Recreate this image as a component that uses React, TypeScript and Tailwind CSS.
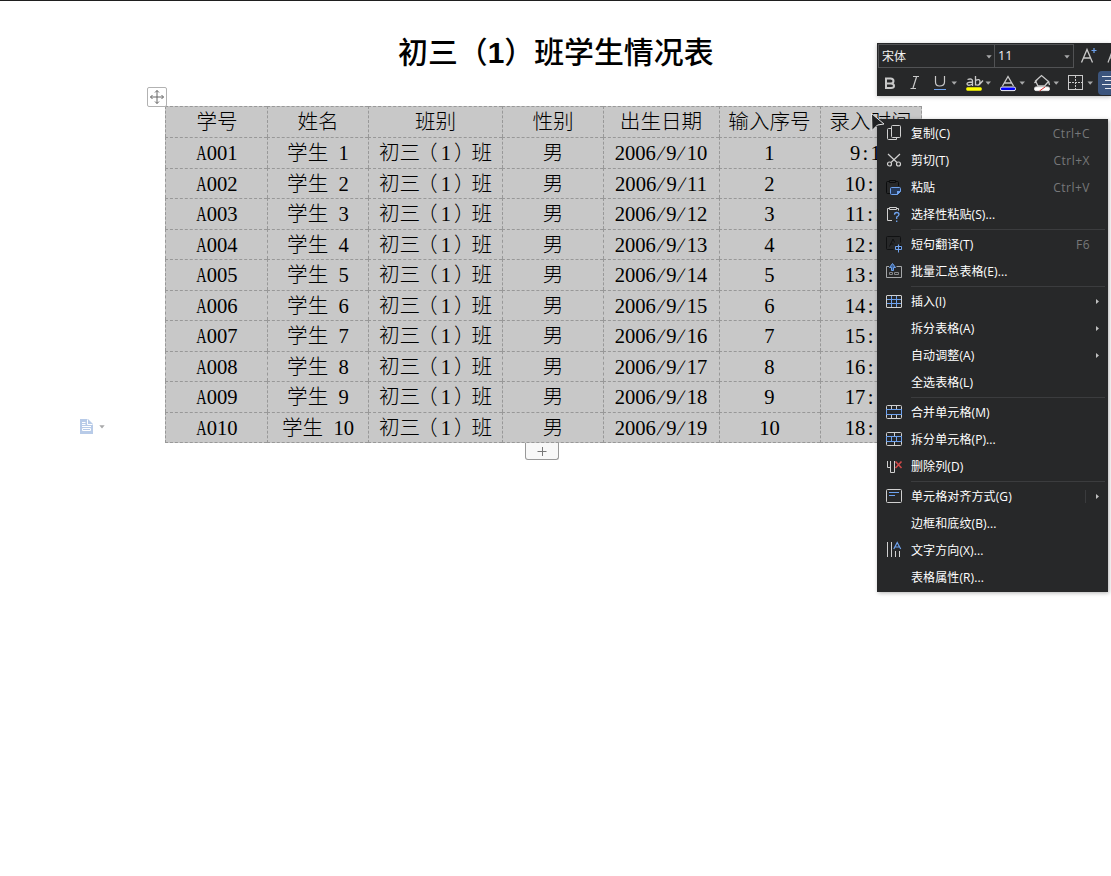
import React from "react";

const headers = ["学号", "姓名", "班别", "性别", "出生日期", "输入序号", "录入时间"];
const students = Array.from({ length: 10 }, (_, i) => [
  "A" + String(i + 1).padStart(3, "0"),
  `学生 ${i + 1}`,
  "初三（1）班",
  "男",
  `2006/9/${10 + i}`,
  String(i + 1),
  `${9 + i}:10`,
]);

/* Keeps letters and punctuation on a half-em advance, like a fixed-pitch serif. */
function HalfWidth({ text }: { text: string }) {
  return (
    <span className="whitespace-pre">
      {text.split(/([A/:（）])/).map((part, i) => {
        if (part === "A")
          return <span key={i} className="-mx-[0.111em] inline-block scale-x-[0.7]">A</span>;
        if (part === "/")
          return <span key={i} className="inline-block w-[0.5em] -skew-x-[14deg] text-center">/</span>;
        if (part === ":") return <span key={i} className="inline-block w-[0.5em] text-center">:</span>;
        if (part === "（")
          return <span key={i} className="ml-[0.35em] mr-[0.15em] [font-feature-settings:'halt']">（</span>;
        if (part === "）")
          return <span key={i} className="ml-[0.15em] mr-[0.35em] [font-feature-settings:'halt']">）</span>;
        return part;
      })}
    </span>
  );
}

const W = "#d0d0d0";
const B = "#6ea2ee";

const icons: Record<string, React.ReactNode> = {
  copy: (
    <g stroke={W}>
      <rect x="7.5" y="5.5" width="9" height="12" rx="1" />
      <path d="M7 8.500H4.500Q3.500 8.500 3.500 9.500V18.500Q3.500 19.500 4.500 19.500H12.500V18" />
    </g>
  ),
  cut: (
    <g stroke={W} strokeWidth="1.200">
      <path d="M4 7L13 15.500M16 7L7 15.500" />
      <circle cx="5.500" cy="17" r="2" />
      <circle cx="14.500" cy="17" r="2" />
    </g>
  ),
  paste: (
    <g>
      <path stroke="#0b0c0d" d="M5.500 7.500H3.500Q2.500 7.500 2.500 8.500V18.500Q2.500 19.500 3.500 19.500H6M11.500 7.500H13.500Q14.500 7.500 14.500 8.500V12M5.500 6.500H11.500V8.500H5.500Z" />
      <path stroke={B} fill="#263a5a" d="M7.500 13.500H15.500Q16.500 13.500 16.500 14.500V17.500L13.500 20.500H7.500Q6.500 20.500 6.500 19.500V14.500Q6.500 13.500 7.500 13.500Z" />
      <path fill={B} stroke="none" d="M13 17H17L13 21Z" />
    </g>
  ),
  special: (
    <g>
      <path stroke={W} d="M5.500 7.500H3.500V19.500H8M12.500 7.500H14.500V9.500M5.500 6.500H12.500V8.500H5.500Z" />
      <path stroke={B} strokeWidth="1.300" d="M10.500 13.700Q10.500 11.500 12.700 11.500Q15 11.500 15 13.500Q15 14.700 12.700 16V18M12.700 19.500V21" />
    </g>
  ),
  translate: (
    <g>
      <rect x="2.500" y="5.500" width="14" height="13" rx="1" stroke="#101112" />
      <path stroke="#101112" d="M5.500 15.500L9 8L12.500 15.500M6.500 13H11" />
      <path stroke="#272829" strokeWidth="2" d="M10.500 20V12.500H18" />
      <path stroke={B} d="M11.500 15.500H17.500V18.500H11.500ZM14.500 13.500V21.500" />
    </g>
  ),
  batch: (
    <g>
      <path stroke="#a5a7a9" d="M5 8.500H2.500V19.500H17.500V8.500H12.500" />
      <path stroke="#85878a" d="M5.500 14.500H8.500V16.500H5.500ZM10.500 14.500H14.500V16.500H10.500Z" />
      <path stroke={B} fill="#3d6297" d="M7.500 12.500V9.500H5.500L8.500 5.500L11.500 9.500H9.500V12.500Z" />
    </g>
  ),
  insert: (
    <g>
      <path stroke={B} d="M3 11.500H17M3 15.500H17M7.500 8V19M12.500 8V19" />
      <rect x="2.500" y="7.500" width="15" height="12" rx="0.500" stroke={W} />
    </g>
  ),
  merge: (
    <g>
      <path stroke={W} d="M2.500 10.500V7.500Q2.500 6.500 3.500 6.500H16.500Q17.500 6.500 17.500 7.500V10.500M2.500 15V18.500Q2.500 19.500 3.500 19.500H16.500Q17.500 19.500 17.500 18.500V15M7.500 7V10M12.500 7V10M7.500 16V19M12.500 16V19" />
      <rect x="2.500" y="10.500" width="15" height="5" stroke={B} />
    </g>
  ),
  split: (
    <g>
      <path stroke={W} d="M2.500 10.500V7.500Q2.500 6.500 3.500 6.500H16.500Q17.500 6.500 17.500 7.500V10.500M2.500 15V18.500Q2.500 19.500 3.500 19.500H16.500Q17.500 19.500 17.500 18.500V15M10.500 7V10M10.500 16V19" />
      <path stroke={B} d="M2.500 10.500H17.500V15.500H2.500ZM7.500 11V15M12.500 11V15" />
    </g>
  ),
  remove: (
    <g>
      <path stroke={W} d="M3.500 8V14.500H6.500M6.500 8V19.500H10.500V15M10.500 8V15" />
      <path stroke="#d04848" strokeWidth="1.600" d="M11.500 8.500L17.500 15M17.500 8.500L11.500 15" />
    </g>
  ),
  align: (
    <g>
      <rect x="2.500" y="6.500" width="15" height="13" rx="1" stroke={W} />
      <path stroke={B} d="M5 9.500H15M5 12.500H11" />
    </g>
  ),
  direction: (
    <g>
      <path stroke={W} d="M3.500 5V20M7.500 5V20M11.500 14V20M15.500 14V20" />
      <path stroke={B} strokeWidth="1.200" d="M9.800 12L13.200 5.500L16.700 12M11 10H15.500" />
    </g>
  ),
};

type Item = { label: string; icon?: string; hint?: string; arrow?: boolean; split?: boolean };

const groups: Item[][] = [
  [
    { label: "复制(C)", icon: "copy", hint: "Ctrl+C" },
    { label: "剪切(T)", icon: "cut", hint: "Ctrl+X" },
    { label: "粘贴", icon: "paste", hint: "Ctrl+V" },
    { label: "选择性粘贴(S)...", icon: "special" },
  ],
  [
    { label: "短句翻译(T)", icon: "translate", hint: "F6" },
    { label: "批量汇总表格(E)...", icon: "batch" },
  ],
  [
    { label: "插入(I)", icon: "insert", arrow: true },
    { label: "拆分表格(A)", arrow: true },
    { label: "自动调整(A)", arrow: true },
    { label: "全选表格(L)" },
  ],
  [
    { label: "合并单元格(M)", icon: "merge" },
    { label: "拆分单元格(P)...", icon: "split" },
    { label: "删除列(D)", icon: "remove" },
  ],
  [
    { label: "单元格对齐方式(G)", icon: "align", arrow: true, split: true },
    { label: "边框和底纹(B)..." },
    { label: "文字方向(X)...", icon: "direction" },
    { label: "表格属性(R)..." },
  ],
];

function MenuRow({ item }: { item: Item }) {
  return (
    <div className="flex h-[27px] items-center pl-[7px]">
      <svg width="20" height="27" viewBox="0 0 20 27" fill="none" className="shrink-0">
        {item.icon && icons[item.icon]}
      </svg>
      <span className="ml-[7px] flex-1 whitespace-nowrap text-[12px] leading-[27px] tracking-[0.1px] text-white">
        {item.label}
      </span>
      {item.hint && (
        <span className="mr-[18px] text-[12px] tracking-[0.5px] text-[#77787a]">{item.hint}</span>
      )}
      {item.split && <span className="mr-[10px] h-[13px] w-px bg-[#3a3b3d]" />}
      {item.arrow && (
        <svg width="3" height="5" viewBox="0 0 3 5" className="mr-[9px]">
          <path d="M0 0L3 2.500L0 5Z" fill="#c0c0c0" />
        </svg>
      )}
    </div>
  );
}

function Caret() {
  return (
    <svg width="6" height="4" viewBox="0 0 6 4" className="shrink-0">
      <path d="M0.300 0.300H5.700L3 3.500Z" fill="#a8a9aa" />
    </svg>
  );
}

function Toolbar() {
  return (
    <div className="absolute left-[877px] top-[42px] h-[53px] w-[234px] overflow-hidden bg-[#272829] text-[#f2f2f2] shadow-[0_1px_4px_rgba(0,0,0,0.25)]">
      <div className="flex h-[26px] w-[260px] pl-px pt-px">
        <div className="flex h-[24px] w-[117px] items-center justify-between border border-[#515254] pl-[3px] pr-[2px] pt-px text-[12px]">
          宋体
          <Caret />
        </div>
        <div className="-ml-px flex h-[24px] w-[80px] items-center justify-between border border-[#515254] pl-[3px] pr-[3px] pt-px text-[12.5px]">
          11
          <Caret />
        </div>
        <svg width="50" height="24" viewBox="0 0 50 24" fill="none" stroke="#c9c9c9" className="ml-px shrink-0">
          <path strokeWidth="1.300" d="M6.500 18.500L12 5.500L17.500 18.500M8.500 14H15.500" />
          <path stroke={B} strokeWidth="1.200" d="M16.500 6.500H21.500M19 4V9" />
          <path strokeWidth="1.200" d="M33 18.500L37.500 6.500L42 18.500M35 14H40" />
        </svg>
      </div>
      <svg width="240" height="27" viewBox="0 0 240 27" fill="none" stroke="#c9c9c9">
        <path strokeWidth="2" d="M9 9.500H13.500Q16.500 9.500 16.500 12Q16.500 14.500 13.500 14.500H9ZM9 14.500H14Q17 14.500 17 17Q17 19 14 19H9Z" />
        <path strokeWidth="1.200" d="M36 7.500H42M33.500 19.500H39M39.500 8L36 19" />
        <path strokeWidth="1.200" d="M58.500 7V13Q58.500 17 62.500 17Q67.500 17 67.500 13V7" />
        <path stroke={B} d="M57 20.500H69" />
        <g strokeWidth="1.300">
          <path d="M90.500 10.500Q95.500 9 95.500 12V17M95.500 13Q90 13 90 15Q91 17.500 95.500 15" />
          <path d="M98.500 7V16.500M98.500 11.500Q103 9 103 13Q102.500 17.500 98.500 15.500M102 16L106 11.500" />
        </g>
        <rect x="89.500" y="18.500" width="15" height="3" rx="1" fill="#ffff00" stroke="#ffff00" strokeWidth="0.500" />
        <path strokeWidth="1.300" d="M125.500 17L131 7.500L136.500 17M127.500 14H134.500" />
        <rect x="123.500" y="18" width="15" height="3.600" rx="1.500" fill="#0000ff" stroke="#f4f4f4" />
        <path strokeWidth="1.300" d="M158.500 12L164.500 6.500L171.500 12.500L167.500 17H161ZM157.500 14L160 11M171.500 12L172.500 16" />
        <rect x="157.500" y="18" width="15" height="3.600" rx="1.500" fill="#fff" stroke="#e4e4e4" />
        <path stroke="#d92d2d" d="M162.500 22L168 18" />
        <rect x="191.500" y="6.500" width="14" height="14" />
        <path strokeDasharray="2 1" d="M192 13.500H205M198.500 7V20" />
        <g fill="#a8a9aa" stroke="none">
          <path d="M74.500 12.500H80L77.200 15.700Z" />
          <path d="M108.500 12.500H114L111.200 15.700Z" />
          <path d="M142.500 12.500H148L145.200 15.700Z" />
          <path d="M176.500 12.500H182L179.200 15.700Z" />
          <path d="M210.500 12.500H216L213.200 15.700Z" />
        </g>
        <rect x="221" y="2" width="30" height="24" rx="4" fill="#3c557d" stroke="none" />
        <path stroke="#e4e8ee" d="M225 7.500H239M228 11.500H239M225 15.500H239M228 19.500H239" />
      </svg>
    </div>
  );
}

export default function App() {
  return (
    <main className="relative h-[876px] w-[1111px] overflow-hidden border-t border-[#1f1f1f] bg-white font-['Open_Sans','Noto_Sans_CJK_SC',sans-serif]">
      <h1 className="ml-[398px] mt-[29px] h-[45px] whitespace-nowrap font-['Liberation_Sans','Noto_Sans_CJK_SC',sans-serif] text-[29.900px] font-medium leading-[45px] text-black">
        初三（<b>1</b>）班学生情况表
      </h1>

      <section className="ml-[165px] mt-[31px] grid w-[757px] grid-cols-[102px_101px_134px_101px_116px_101px_102px] grid-rows-[31px_31px_30px_31px_30px_31px_30px_31px_30px_31px_31px] bg-[#c8c8c8] font-['Liberation_Serif','Noto_Sans_CJK_SC',serif] text-[20.6px] font-light text-black">
        {[headers, ...students].map((row, r) =>
          row.map((cell, c) => (
            <div
              key={`${r}-${c}`}
              className={`flex items-center justify-center overflow-hidden border-l border-t border-dashed border-[#989898] leading-[28px] [word-spacing:0.25em] ${
                c === 0 ? "pl-px" : c < 4 ? "" : "pr-px"
              } ${c === 6 ? "border-r" : ""} ${r === 10 ? "border-b" : ""}`}
            >
              <HalfWidth text={cell} />
            </div>
          ))
        )}
      </section>

      <button className="ml-[525px] flex h-[17px] w-[34px] items-center justify-center rounded-b-[3px] border border-t-0 border-[#999] bg-[#f8f8f8]">
        <svg width="10" height="10" viewBox="0 0 10 10" stroke="#777">
          <path d="M0.500 5.500H9.500M5.500 1V10" />
        </svg>
      </button>

      <div className="absolute left-[147px] top-[86px] flex h-[20px] w-[20px] items-center justify-center rounded-[2px] border border-[#b2b2b2] bg-white">
        <svg width="16" height="16" viewBox="0 0 16 16" fill="none" stroke="#666">
          <path d="M1.500 8H14.500M8 1.500V14.500M3.500 6L1.500 8L3.500 10M12.500 6L14.500 8L12.500 10M6 3.500L8 1.500L10 3.500M6 12.500L8 14.500L10 12.500" />
        </svg>
      </div>

      <div className="absolute left-[80px] top-[418px] flex items-center gap-[6px]">
        <svg width="13" height="15" viewBox="0 0 13 15" fill="none">
          <path d="M0 0H8L13 5V15H0Z" fill="#b8cbe8" />
          <path d="M7.500 0.500V5.500H12.500M2 3.500H5.500M2 5.500H5.500M2 7.500H11M2.500 9.500H10.500V11.500H2.500Z" stroke="#fff" />
        </svg>
        <Caret />
      </div>

      <Toolbar />

      <nav className="absolute left-[877px] top-[118px] h-[473px] w-[231px] bg-[#272829] pt-px shadow-[1px_1px_4px_rgba(0,0,0,0.3)]">
        {groups.map((group, g) => (
          <React.Fragment key={g}>
            {g > 0 && (
              <div className="flex h-[3px] items-center pl-[34px] pr-[3px]">
                <span className="h-px w-full bg-[#3b3c3e]" />
              </div>
            )}
            {group.map((item) => (
              <MenuRow key={item.label} item={item} />
            ))}
          </React.Fragment>
        ))}
      </nav>

      <svg width="17" height="21" viewBox="0 0 17 21" className="absolute left-[870px] top-[111px]">
        <path d="M1.500 1.500L14 12L7.500 13L2 18.500Z" fill="#202122" stroke="#e8e8e8" strokeLinejoin="round" />
      </svg>
    </main>
  );
}
